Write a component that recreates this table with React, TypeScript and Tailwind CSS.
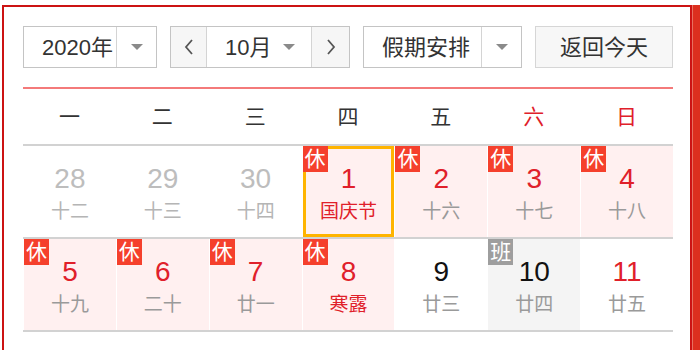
import React from "react";

type Cell = {
  n: number;
  l: string;
  dim?: boolean;
  rest?: boolean;
  work?: boolean;
  sel?: boolean;
  fest?: boolean;
  red?: boolean;
  gray?: boolean;
};

const rows: Cell[][] = [
  [
    { n: 28, l: "十二", dim: true },
    { n: 29, l: "十三", dim: true },
    { n: 30, l: "十四", dim: true },
    { n: 1, l: "国庆节", rest: true, sel: true, fest: true },
    { n: 2, l: "十六", rest: true },
    { n: 3, l: "十七", rest: true },
    { n: 4, l: "十八", rest: true },
  ],
  [
    { n: 5, l: "十九", rest: true },
    { n: 6, l: "二十", rest: true },
    { n: 7, l: "廿一", rest: true },
    { n: 8, l: "寒露", rest: true, fest: true },
    { n: 9, l: "廿三" },
    { n: 10, l: "廿四", work: true, gray: true },
    { n: 11, l: "廿五", red: true },
  ],
];

const weekdays = ["一", "二", "三", "四", "五", "六", "日"];

function Tri() {
  return <div className="w-0 h-0 border-l-[6px] border-r-[6px] border-t-[6px] border-l-transparent border-r-transparent border-t-[#8a8a8a]" />;
}

function Chevron({ dir }: { dir: "l" | "r" }) {
  return (
    <svg width="12" height="18" viewBox="0 0 12 18">
      <polyline
        points={dir === "l" ? "9,2 3,9 9,16" : "3,2 9,9 3,16"}
        fill="none"
        stroke="#555"
        strokeWidth="1.8"
      />
    </svg>
  );
}

function DayCell({ c }: { c: Cell }) {
  const bg = c.rest ? "bg-[#fff0f0]" : c.gray ? "bg-[#f4f4f4]" : "bg-white";
  const numColor = c.dim
    ? "text-[#bdbdbd]"
    : c.rest || c.red
    ? "text-[#e0202a]"
    : "text-[#111]";
  const lunarColor = c.fest ? "text-[#e0202a]" : c.dim ? "text-[#b5b5b5]" : "text-[#9a9a9a]";
  return (
    <div className="border-l border-white h-full">
      <div className={`relative h-full ${bg} ${c.sel ? "border-[3px] border-[#ffb400]" : ""}`}>
        {c.rest && (
          <div className={`absolute ${c.sel ? "-left-[3px] -top-[3px]" : "left-0 top-0"} w-[25px] h-[26px] bg-[#f5402c] text-white text-[21px] leading-[26px] text-center`}>
            休
          </div>
        )}
        {c.work && (
          <div className="absolute left-0 top-0 w-[25px] h-[26px] bg-[#9e9e9e] text-white text-[21px] leading-[26px] text-center">
            班
          </div>
        )}
        <div className={`flex flex-col items-center ${c.sel ? "pt-[16px]" : "pt-[19px]"}`}>
          <div className={`text-[28px] leading-[28px] ${numColor}`}>{c.n}</div>
          <div className={`mt-[9px] text-[19px] leading-[20px] ${lunarColor}`}>{c.l}</div>
        </div>
      </div>
    </div>
  );
}

export default function App() {
  return (
    <div className="w-[700px] h-[350px] overflow-hidden bg-white font-['Liberation_Sans','Noto_Sans_CJK_SC',sans-serif]">
      <div className="flex ml-[2px] mt-[5px] h-[345px]">
        <div className="w-[690px] border-t-2 border-l-2 border-r-2 border-[#cc1313] pt-[19px] pl-[19px] pr-[17px]">
          {/* controls */}
          <div className="flex gap-[13px] h-[42px] text-[#333] text-[22px]">
            <div className="flex w-[134px] border border-[#c4c4c4] bg-white">
              <div className="w-[93px] flex items-center pl-[18px] border-r border-[#d4d4d4]">2020年</div>
              <div className="flex-1 flex items-center justify-center"><Tri /></div>
            </div>
            <div className="flex w-[180px] border border-[#c4c4c4] bg-white">
              <div className="w-[36px] flex items-center justify-center bg-[#f6f6f6] border-r border-[#d4d4d4]"><Chevron dir="l" /></div>
              <div className="flex-1 flex items-center pl-[18px] border-r border-[#d4d4d4]">
                <span>10月</span>
                <span className="ml-[12px]"><Tri /></span>
              </div>
              <div className="w-[37px] flex items-center justify-center bg-[#f6f6f6]"><Chevron dir="r" /></div>
            </div>
            <div className="flex w-[159px] border border-[#c4c4c4] bg-white">
              <div className="w-[118px] flex items-center pl-[18px] border-r border-[#d4d4d4]">假期安排</div>
              <div className="flex-1 flex items-center justify-center"><Tri /></div>
            </div>
            <div className="flex w-[138px] items-center justify-center border border-[#d6d6d6] bg-[#f7f7f7]">返回今天</div>
          </div>
          {/* red line */}
          <div className="mt-[19px] h-[2px] bg-[#f47a7a]" />
          {/* weekdays */}
          <div className="grid grid-cols-7 h-[55px] items-center text-[21px]">
            {weekdays.map((w, i) => (
              <div key={w} className={`text-center ${i >= 5 ? "text-[#e0202a]" : "text-[#333]"}`}>{w}</div>
            ))}
          </div>
          {/* grid */}
          <div className="border-t-2 border-[#d2d2d2]">
            {rows.map((r, ri) => (
              <div key={ri} className="grid grid-cols-7 h-[93px] border-b-2 border-[#d2d2d2]">
                {r.map((c) => (
                  <DayCell key={c.n} c={c} />
                ))}
              </div>
            ))}
          </div>
        </div>
        <div className="flex-1 flex">
          <div className="w-[1px] bg-[#e87060]" />
          <div className="flex-1 bg-[#dc2f1e]" />
        </div>
      </div>
    </div>
  );
}
